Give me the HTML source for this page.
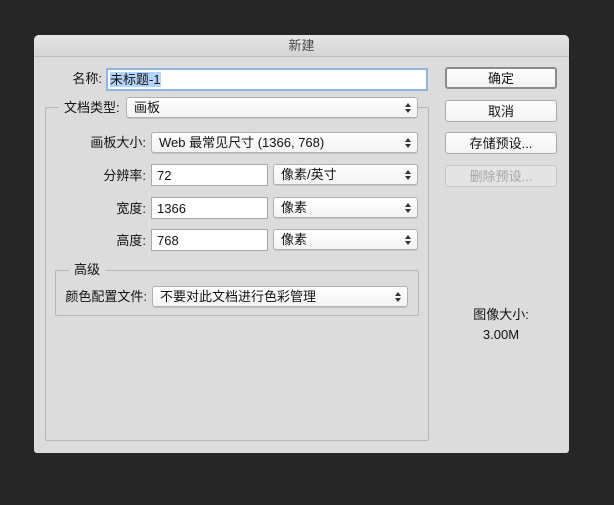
<!DOCTYPE html>
<html><head><meta charset="utf-8"><style>
*{margin:0;padding:0;box-sizing:border-box}
body{width:614px;height:505px;background:#262626;position:relative;overflow:hidden;font-family:"Liberation Sans","Noto Sans CJK SC",sans-serif;font-size:13px;color:#111}
.a{position:absolute}
#dlg{left:34px;top:35px;width:535px;height:418px;background:#dcdcdc;border-radius:5px 5px 3px 3px;overflow:hidden}
#tb{left:0;top:0;width:535px;height:22px;background:linear-gradient(#e6e6e6,#d4d4d4);border-bottom:1px solid #bdbdbd;text-align:center;line-height:22px;color:#4a4a4a;font-size:13px}
.lbl{text-align:right;line-height:24px;white-space:nowrap}
.in{background:#fff;border:1px solid #a8a8a8;line-height:21px;padding-left:5px}
.sel{background:linear-gradient(#fff,#f3f3f3);border:1px solid #b0b0b0;border-radius:3px;line-height:20px;padding-left:7px;box-shadow:0 1px 0 #c4c4c4}
.sel:after{content:"";position:absolute;right:6px;top:5px;width:0;height:0;border-left:3px solid transparent;border-right:3px solid transparent;border-bottom:4px solid #333}
.sel:before{content:"";position:absolute;right:6px;top:11px;width:0;height:0;border-left:3px solid transparent;border-right:3px solid transparent;border-top:4px solid #333}
.box{border:1px solid #b6b6b6;border-radius:2px}
.leg{background:#dcdcdc;padding:0 5px;line-height:16px}
.btn{left:411px;width:112px;height:22px;background:linear-gradient(#fff,#f2f2f2);border:1px solid #a9a9a9;border-radius:3px;text-align:center;line-height:21px}
</style></head><body>
<div id="dlg" class="a">
<div id="tb" class="a">新建</div>
<div class="a lbl" style="left:0;width:68px;top:32px">名称:</div>
<div class="a in" style="left:72px;top:33px;width:322px;height:23px;border:2px solid #8fb4e6;line-height:19px;padding-left:2px"><span style="background:#b3d4fc">未标题-1</span></div>
<div class="a box" style="left:11px;top:72px;width:384px;height:334px"></div>
<div class="a leg" style="left:25px;top:65px">文档类型:</div>
<div class="a sel" style="left:92px;top:62px;width:292px;height:21px">画板</div>
<div class="a lbl" style="left:0;width:112px;top:96px">画板大小:</div>
<div class="a sel" style="left:117px;top:97px;width:267px;height:21px">Web 最常见尺寸 (1366, 768)</div>
<div class="a lbl" style="left:0;width:112px;top:129px">分辨率:</div>
<div class="a in" style="left:117px;top:129px;width:117px;height:22px">72</div>
<div class="a sel" style="left:239px;top:129px;width:145px;height:21px">像素/英寸</div>
<div class="a lbl" style="left:0;width:112px;top:162px">宽度:</div>
<div class="a in" style="left:117px;top:162px;width:117px;height:22px">1366</div>
<div class="a sel" style="left:239px;top:162px;width:145px;height:21px">像素</div>
<div class="a lbl" style="left:0;width:112px;top:194px">高度:</div>
<div class="a in" style="left:117px;top:194px;width:117px;height:22px">768</div>
<div class="a sel" style="left:239px;top:194px;width:145px;height:21px">像素</div>
<div class="a box" style="left:21px;top:235px;width:364px;height:46px"></div>
<div class="a leg" style="left:35px;top:227px">高级</div>
<div class="a lbl" style="left:0;width:113px;top:250px">颜色配置文件:</div>
<div class="a sel" style="left:118px;top:251px;width:256px;height:21px">不要对此文档进行色彩管理</div>
<div class="a btn" style="top:32px;border:2px solid #8a8a8a;line-height:19px">确定</div>
<div class="a btn" style="top:65px">取消</div>
<div class="a btn" style="top:97px">存储预设...</div>
<div class="a btn" style="top:130px;color:#a5a5a5;border-color:#c6c6c6;background:#e4e4e4">删除预设...</div>
<div class="a" style="left:411px;width:112px;top:269px;text-align:center">图像大小:</div>
<div class="a" style="left:411px;width:112px;top:292px;text-align:center">3.00M</div>
</div>
</body></html>
